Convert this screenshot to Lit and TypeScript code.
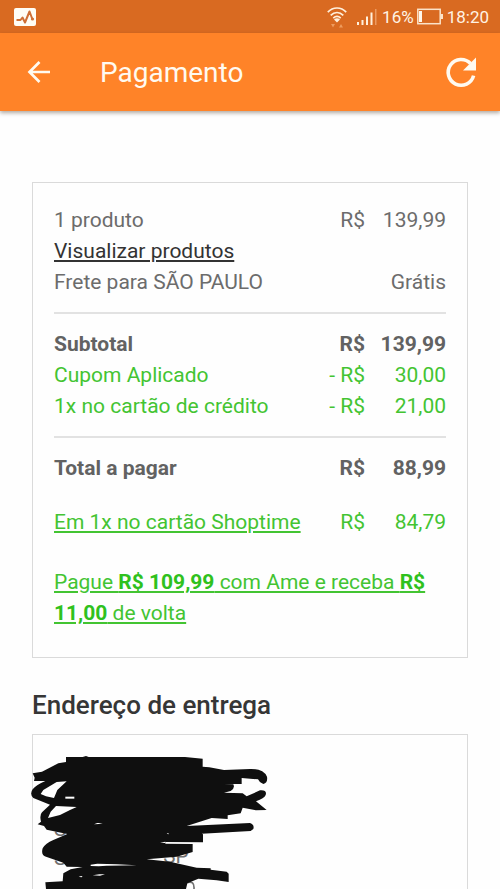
import { LitElement, html, css, svg, nothing } from "lit";
import { customElement, property } from "lit/decorators.js";

interface Row {
  label: string;
  sign?: string;
  amount?: string;
  note?: string;
  kind?: "strong" | "green";
  link?: "dark" | "green";
}

const products: Row[] = [
  { label: "1 produto", sign: "R$", amount: "139,99" },
  { label: "Visualizar produtos", link: "dark" },
  { label: "Frete para SÃO PAULO", note: "Grátis" },
];

const subtotal: Row[] = [
  { label: "Subtotal", sign: "R$", amount: "139,99", kind: "strong" },
  { label: "Cupom Aplicado", sign: "- R$", amount: "30,00", kind: "green" },
  { label: "1x no cartão de crédito", sign: "- R$", amount: "21,00", kind: "green" },
];

const total: Row[] = [{ label: "Total a pagar", sign: "R$", amount: "88,99", kind: "strong" }];

const storeCard: Row[] = [
  { label: "Em 1x no cartão Shoptime", sign: "R$", amount: "84,79", kind: "green", link: "green" },
];

@customElement("status-bar")
export class StatusBar extends LitElement {
  static styles = css`
    :host {
      display: flex;
      align-items: center;
      justify-content: space-between;
      height: 33px;
      padding: 0 11px 0 14px;
      background: #d96a21;
      color: #fff3e4;
      font-size: 17px;
      line-height: 20px;
    }
    .group {
      display: flex;
      align-items: center;
    }
    .wifi {
      margin-right: 10px;
    }
    .signal {
      margin-right: 5px;
    }
    .battery {
      margin: 0 4px 0 3px;
    }
    svg {
      display: block;
    }
  `;

  render() {
    return html`
      <svg width="22" height="18" viewBox="0 0 22 18" aria-hidden="true">
        <rect width="22" height="18" rx="2" fill="#fffdf5" />
        <path d="M2.500 12H6.500l2-2.500 2.500 5 4.500-11 3 8" fill="none" stroke="#cf6f35" stroke-width="2" stroke-linejoin="round" />
        <circle cx="18.500" cy="11" r="1.600" fill="#cf6f35" />
      </svg>
      <div class="group">
        <svg class="wifi" width="20" height="22" viewBox="0 0 20 22" aria-hidden="true">
          <g fill="none" stroke="#fff0dc" stroke-width="1.700">
            <path d="M.8 6.200C6 .6 14 .6 19.200 6.200" />
            <path d="M3.700 9.400C7.500 5.500 12.500 5.500 16.300 9.400" />
            <path d="M6.300 12.200C8.500 10.100 11.500 10.100 13.700 12.200" />
          </g>
          <path d="M10 16.500l-3-3q3-2.400 6 0z" fill="#fff0dc" />
          <path d="M4 18h4l-2 3.500zM12 21.500h4l-2-3.500z" fill="#ee9c5f" />
        </svg>
        <svg class="signal" width="20" height="18" viewBox="0 0 20 18" aria-hidden="true">
          <path d="M0 14h2v3H0zM4.500 12h2v5h-2zM9 8.500h2V17H9zM13.500 4.500h2V17h-2z" fill="#fff0dc" />
          <path d="M18 1h1.500v16H18z" fill="#ec9a61" />
        </svg>
        <span>16%</span>
        <svg class="battery" width="26" height="18" viewBox="0 0 26 18" aria-hidden="true">
          <rect x=".8" y="1.300" width="22.400" height="14.400" fill="none" stroke="#fbe3c9" stroke-width="1.500" />
          <path d="M2 3h3v11H2z" fill="#fff8ec" />
          <path d="M24 6h2v5h-2z" fill="#fbe3c9" />
        </svg>
        <span>18:20</span>
      </div>
    `;
  }
}

@customElement("app-bar")
export class AppBar extends LitElement {
  static styles = css`
    :host {
      display: flex;
      align-items: center;
      height: 78px;
      padding: 0 22px 0 24px;
      background: #ff8328;
      color: #fffaf0;
      box-shadow: 0 2px 4px rgba(60, 40, 20, 0.4);
    }
    h1 {
      flex: 1;
      margin: 2px 0 0 46px;
      font-size: 28px;
      line-height: 32px;
      font-weight: 400;
    }
    button {
      display: grid;
      place-items: center;
      padding: 0;
      border: 0;
      background: none;
      color: inherit;
    }
  `;

  render() {
    return html`
      <button type="button" aria-label="Voltar">
        <svg width="30" height="30" viewBox="0 0 30 30" aria-hidden="true">
          <path d="M26 15H6M15.500 5L5.500 15l10 10" fill="none" stroke="currentColor" stroke-width="2.700" />
        </svg>
      </button>
      <h1>Pagamento</h1>
      <button type="button" aria-label="Atualizar">
        <svg width="34" height="34" viewBox="0 0 34 34" aria-hidden="true">
          <path d="M29.600 20.600A12.900 12.900 0 1 1 26.500 8.500" fill="none" stroke="currentColor" stroke-width="3.600" />
          <path d="M32 2.500V15.500H19z" fill="currentColor" />
        </svg>
      </button>
    `;
  }
}

@customElement("price-rows")
export class PriceRows extends LitElement {
  @property({ attribute: false }) rows: Row[] = [];

  static styles = css`
    :host {
      display: block;
    }
    .row {
      display: grid;
      grid-template-columns: 1fr auto 81px;
      line-height: 31px;
    }
    .amount,
    .note {
      text-align: right;
    }
    .note {
      grid-column: 2 / 4;
    }
    .strong {
      color: #626262;
      font-weight: 700;
    }
    .green,
    .link-green {
      color: #43c432;
    }
    .link-dark {
      color: #333;
    }
    a {
      text-decoration: underline;
      text-decoration-thickness: 2px;
      text-underline-offset: 2px;
    }
  `;

  render() {
    return this.rows.map(
      (r) => html`
        <div class="row ${r.kind ?? ""}">
          <span>${r.link ? html`<a class="link-${r.link}" href="#">${r.label}</a>` : r.label}</span>
          ${r.amount ? html`<span>${r.sign}</span><span class="amount">${r.amount}</span>` : nothing}
          ${r.note ? html`<span class="note">${r.note}</span>` : nothing}
        </div>
      `,
    );
  }
}

const marker = svg`
  <g fill="#707070" font-family="Roboto, sans-serif" font-size="62">
    <text x="102" y="467">S</text>
    <text x="102" y="556">S</text>
    <text x="430" y="549">SP</text>
  </g>
  <path d="M500 608Q524 600 522 627" fill="none" stroke="#707070" stroke-width="5" />
  <g fill="#0f0f0f">
    <path d="M138 231H188L198 228 206 231H495L548 236V260L568 262 612 270 690 267Q730 266 741 290Q744 308 730 312Q718 308 714 298L665 294V312H612L640 313Q646 325 632 333L612 338 668 340 680 349 720 331Q742 329 737 345Q733 355 708 364L740 390 708 391 668 383 662 400 623 406V417L575 414 500 438 690 429Q704 434 700 447L692 453 545 461 549 463V487L436 486V491L518 492V516L470 530 380 538 450 545 530 563 572 565V569L620 575 626 581V606L590 601 535 596 502 610 498 627H78L76 607 128 604 130 580 152 568 188 561 140 560 130 548 78 530Q62 526 68 505Q76 490 100 480L142 462 80 449 72 438 53 433 63 425Q58 405 66 397L90 374 40 354Q28 342 38 328Q48 315 76 303H42L44 293 38 280 66 275 115 250 138 246Z" />
  </g>
  <g fill="#fff">
    <path d="M140 304L110 306 70 330 62 342 78 349 102 354 112 330Z" />
    <path d="M170 381L108 378 92 395 84 414 120 405 150 390Z" />
    <path d="M136 350H163V356H136Z" />
    <path d="M222 433L232 429 248 429 236 432Z" />
    <path d="M212 554L232 551 290 553 350 556 260 557 236 559 212 558Z" />
    <path d="M218 586L238 583 255 583 240 587ZM176 590L184 588 188 590 184 592Z" />
    <path d="M420 488L436 485V489ZM440 461L445 459 446 463Z" />
  </g>
`;

@customElement("app-root")
export class AppRoot extends LitElement {
  static styles = css`
    :host {
      display: flex;
      flex-direction: column;
      min-height: 100vh;
      background: #fefefe;
      color: #6c6c6c;
      font-family: Roboto, "Liberation Sans", sans-serif;
      font-size: 21px;
    }
    main {
      flex: 1;
      display: flex;
      flex-direction: column;
      padding: 71px 32px 0;
    }
    .card {
      border: 1px solid #dadada;
      padding: 22px 21px;
    }
    .summary {
      padding-bottom: 28px;
    }
    hr {
      margin: 14px 0 15px;
      border: 0;
      border-top: 2px solid #e2e2e2;
    }
    .store {
      margin-top: 23px;
    }
    .ame {
      margin: 29px 0 0;
      line-height: 31px;
    }
    .ame a {
      color: #43c432;
      text-decoration: underline;
      text-decoration-thickness: 2px;
      text-underline-offset: 2px;
    }
    .ame b {
      color: #2fc11d;
    }
    h2 {
      margin: 31px 0 13px;
      color: #363636;
      font-size: 26px;
      line-height: 32px;
      font-weight: 500;
    }
    .address {
      position: relative;
      flex: 1;
      min-height: 110px;
      border-bottom: 0;
    }
    .marker {
      position: absolute;
      left: -3px;
      top: 18px;
    }
  `;

  render() {
    return html`
      <status-bar></status-bar>
      <app-bar></app-bar>
      <main>
        <section class="card summary">
          <price-rows .rows=${products}></price-rows>
          <hr />
          <price-rows .rows=${subtotal}></price-rows>
          <hr />
          <price-rows .rows=${total}></price-rows>
          <price-rows class="store" .rows=${storeCard}></price-rows>
          <p class="ame">
            <a href="#">Pague <b>R$ 109,99</b> com Ame e receba <b>R$ 11,00</b> de volta</a>
          </p>
        </section>
        <h2>Endereço de entrega</h2>
        <section class="card address">
          <svg class="marker" width="240" height="136" viewBox="30 219 720 408" aria-hidden="true">${marker}</svg>
        </section>
      </main>
    `;
  }
}
